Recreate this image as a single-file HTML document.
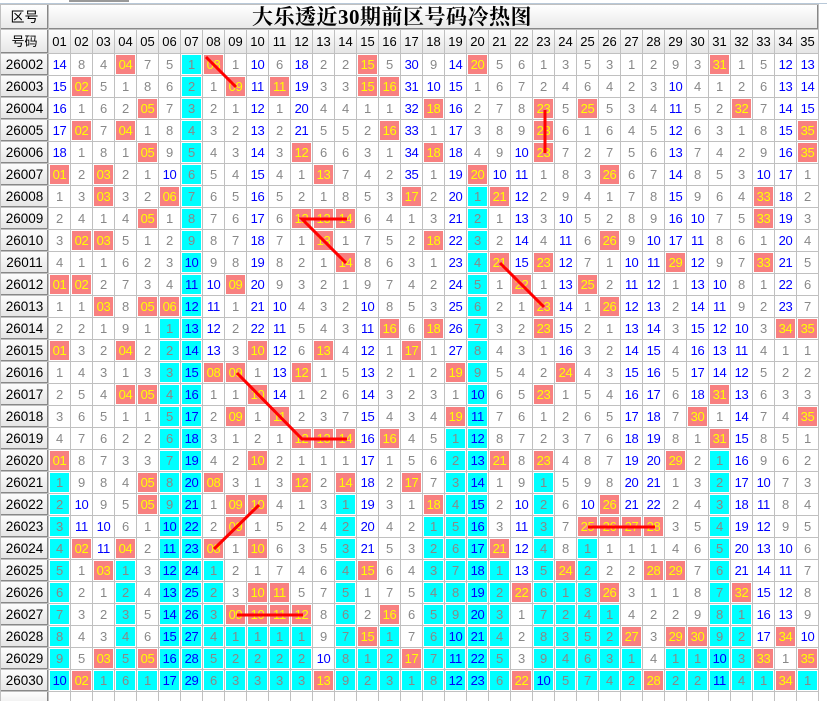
<!DOCTYPE html>
<html><head><meta charset="utf-8"><style>
html,body{margin:0;padding:0;background:#fff;width:827px;height:701px;overflow:hidden;position:relative}
.topline{position:absolute;left:0;top:3px;width:827px;height:1px;background:#b8c8d8}
.tab{position:absolute;left:69px;top:0;width:60px;height:2px;background:#999}
table{position:absolute;left:0;top:4px;border-collapse:separate;border-spacing:1px;background:#c0c0c0;table-layout:fixed;font-family:"Liberation Sans",sans-serif}
td{width:21px;height:21px;padding:0;background:#fff;text-align:center;vertical-align:middle;font-size:13px;color:#888;letter-spacing:-0.3px;line-height:21px;overflow:hidden;white-space:nowrap}
td.h{width:47px;color:#000;background:linear-gradient(#fdfdfd,#e4e4e4);box-shadow:inset -1px -1px 0 #888;font-size:13.5px;letter-spacing:0}
tr.hd td{height:23px;color:#000;background:linear-gradient(#fdfdfd,#e6e6e6);font-size:13px;letter-spacing:0}
tr.tt td{height:24px;background:linear-gradient(#ffffff,#e8e8e8);color:#000}
td.ti{text-align:left;padding-left:203px;font-family:"Liberation Serif","Noto Serif CJK SC",serif;font-weight:bold;font-size:21px;letter-spacing:0.5px;box-shadow:inset -1px -1px 0 #888}
td.b{color:#0000ff}
td.r{background:#f88080;color:#ffff00;box-shadow:inset 0 0 0 1px #fff}
td.c{background:#00ffff;box-shadow:inset 0 0 0 1px #fff}
tr.e td{height:21px}
svg{position:absolute;left:0;top:0}
</style></head><body>
<div class="topline"></div><div class="tab"></div>
<table>
<tr class="tt"><td class="h" style="height:24px;font-size:14px">区号</td><td class="ti" colspan="35">大乐透近30期前区号码冷热图</td></tr>
<tr class="hd"><td class="h" style="height:23px">号码</td><td>01</td><td>02</td><td>03</td><td>04</td><td>05</td><td>06</td><td>07</td><td>08</td><td>09</td><td>10</td><td>11</td><td>12</td><td>13</td><td>14</td><td>15</td><td>16</td><td>17</td><td>18</td><td>19</td><td>20</td><td>21</td><td>22</td><td>23</td><td>24</td><td>25</td><td>26</td><td>27</td><td>28</td><td>29</td><td>30</td><td>31</td><td>32</td><td>33</td><td>34</td><td>35</td></tr>
<tr><td class="h">26002</td><td class=b>14</td><td>8</td><td>4</td><td class=r>04</td><td>7</td><td>5</td><td class=c>1</td><td class=r>08</td><td>1</td><td class=b>10</td><td>6</td><td class=b>18</td><td>2</td><td>2</td><td class=r>15</td><td>5</td><td class=b>30</td><td>9</td><td class=b>14</td><td class=r>20</td><td>5</td><td>6</td><td>1</td><td>3</td><td>5</td><td>3</td><td>1</td><td>2</td><td>9</td><td>3</td><td class=r>31</td><td>1</td><td>5</td><td class=b>12</td><td class=b>13</td></tr>
<tr><td class="h">26003</td><td class=b>15</td><td class=r>02</td><td>5</td><td>1</td><td>8</td><td>6</td><td class=c>2</td><td>1</td><td class=r>09</td><td class=b>11</td><td class=r>11</td><td class=b>19</td><td>3</td><td>3</td><td class=r>15</td><td class=r>16</td><td class=b>31</td><td class=b>10</td><td class=b>15</td><td>1</td><td>6</td><td>7</td><td>2</td><td>4</td><td>6</td><td>4</td><td>2</td><td>3</td><td class=b>10</td><td>4</td><td>1</td><td>2</td><td>6</td><td class=b>13</td><td class=b>14</td></tr>
<tr><td class="h">26004</td><td class=b>16</td><td>1</td><td>6</td><td>2</td><td class=r>05</td><td>7</td><td class=c>3</td><td>2</td><td>1</td><td class=b>12</td><td>1</td><td class=b>20</td><td>4</td><td>4</td><td>1</td><td>1</td><td class=b>32</td><td class=r>18</td><td class=b>16</td><td>2</td><td>7</td><td>8</td><td class=r>23</td><td>5</td><td class=r>25</td><td>5</td><td>3</td><td>4</td><td class=b>11</td><td>5</td><td>2</td><td class=r>32</td><td>7</td><td class=b>14</td><td class=b>15</td></tr>
<tr><td class="h">26005</td><td class=b>17</td><td class=r>02</td><td>7</td><td class=r>04</td><td>1</td><td>8</td><td class=c>4</td><td>3</td><td>2</td><td class=b>13</td><td>2</td><td class=b>21</td><td>5</td><td>5</td><td>2</td><td class=r>16</td><td class=b>33</td><td>1</td><td class=b>17</td><td>3</td><td>8</td><td>9</td><td class=r>23</td><td>6</td><td>1</td><td>6</td><td>4</td><td>5</td><td class=b>12</td><td>6</td><td>3</td><td>1</td><td>8</td><td class=b>15</td><td class=r>35</td></tr>
<tr><td class="h">26006</td><td class=b>18</td><td>1</td><td>8</td><td>1</td><td class=r>05</td><td>9</td><td class=c>5</td><td>4</td><td>3</td><td class=b>14</td><td>3</td><td class=r>12</td><td>6</td><td>6</td><td>3</td><td>1</td><td class=b>34</td><td class=r>18</td><td class=b>18</td><td>4</td><td>9</td><td class=b>10</td><td class=r>23</td><td>7</td><td>2</td><td>7</td><td>5</td><td>6</td><td class=b>13</td><td>7</td><td>4</td><td>2</td><td>9</td><td class=b>16</td><td class=r>35</td></tr>
<tr><td class="h">26007</td><td class=r>01</td><td>2</td><td class=r>03</td><td>2</td><td>1</td><td class=b>10</td><td class=c>6</td><td>5</td><td>4</td><td class=b>15</td><td>4</td><td>1</td><td class=r>13</td><td>7</td><td>4</td><td>2</td><td class=b>35</td><td>1</td><td class=b>19</td><td class=r>20</td><td class=b>10</td><td class=b>11</td><td>1</td><td>8</td><td>3</td><td class=r>26</td><td>6</td><td>7</td><td class=b>14</td><td>8</td><td>5</td><td>3</td><td class=b>10</td><td class=b>17</td><td>1</td></tr>
<tr><td class="h">26008</td><td>1</td><td>3</td><td class=r>03</td><td>3</td><td>2</td><td class=r>06</td><td class=c>7</td><td>6</td><td>5</td><td class=b>16</td><td>5</td><td>2</td><td>1</td><td>8</td><td>5</td><td>3</td><td class=r>17</td><td>2</td><td class=b>20</td><td class=c>1</td><td class=r>21</td><td class=b>12</td><td>2</td><td>9</td><td>4</td><td>1</td><td>7</td><td>8</td><td class=b>15</td><td>9</td><td>6</td><td>4</td><td class=r>33</td><td class=b>18</td><td>2</td></tr>
<tr><td class="h">26009</td><td>2</td><td>4</td><td>1</td><td>4</td><td class=r>05</td><td>1</td><td class=c>8</td><td>7</td><td>6</td><td class=b>17</td><td>6</td><td class=r>12</td><td class=r>13</td><td class=r>14</td><td>6</td><td>4</td><td>1</td><td>3</td><td class=b>21</td><td class=c>2</td><td>1</td><td class=b>13</td><td>3</td><td class=b>10</td><td>5</td><td>2</td><td>8</td><td>9</td><td class=b>16</td><td class=b>10</td><td>7</td><td>5</td><td class=r>33</td><td class=b>19</td><td>3</td></tr>
<tr><td class="h">26010</td><td>3</td><td class=r>02</td><td class=r>03</td><td>5</td><td>1</td><td>2</td><td class=c>9</td><td>8</td><td>7</td><td class=b>18</td><td>7</td><td>1</td><td class=r>13</td><td>1</td><td>7</td><td>5</td><td>2</td><td class=r>18</td><td class=b>22</td><td class=c>3</td><td>2</td><td class=b>14</td><td>4</td><td class=b>11</td><td>6</td><td class=r>26</td><td>9</td><td class=b>10</td><td class=b>17</td><td class=b>11</td><td>8</td><td>6</td><td>1</td><td class=b>20</td><td>4</td></tr>
<tr><td class="h">26011</td><td>4</td><td>1</td><td>1</td><td>6</td><td>2</td><td>3</td><td class="c b">10</td><td>9</td><td>8</td><td class=b>19</td><td>8</td><td>2</td><td>1</td><td class=r>14</td><td>8</td><td>6</td><td>3</td><td>1</td><td class=b>23</td><td class=c>4</td><td class=r>21</td><td class=b>15</td><td class=r>23</td><td class=b>12</td><td>7</td><td>1</td><td class=b>10</td><td class=b>11</td><td class=r>29</td><td class=b>12</td><td>9</td><td>7</td><td class=r>33</td><td class=b>21</td><td>5</td></tr>
<tr><td class="h">26012</td><td class=r>01</td><td class=r>02</td><td>2</td><td>7</td><td>3</td><td>4</td><td class="c b">11</td><td class=b>10</td><td class=r>09</td><td class=b>20</td><td>9</td><td>3</td><td>2</td><td>1</td><td>9</td><td>7</td><td>4</td><td>2</td><td class=b>24</td><td class=c>5</td><td>1</td><td class=r>22</td><td>1</td><td class=b>13</td><td class=r>25</td><td>2</td><td class=b>11</td><td class=b>12</td><td>1</td><td class=b>13</td><td class=b>10</td><td>8</td><td>1</td><td class=b>22</td><td>6</td></tr>
<tr><td class="h">26013</td><td>1</td><td>1</td><td class=r>03</td><td>8</td><td class=r>05</td><td class=r>06</td><td class="c b">12</td><td class=b>11</td><td>1</td><td class=b>21</td><td class=b>10</td><td>4</td><td>3</td><td>2</td><td class=b>10</td><td>8</td><td>5</td><td>3</td><td class=b>25</td><td class=c>6</td><td>2</td><td>1</td><td class=r>23</td><td class=b>14</td><td>1</td><td class=r>26</td><td class=b>12</td><td class=b>13</td><td>2</td><td class=b>14</td><td class=b>11</td><td>9</td><td>2</td><td class=b>23</td><td>7</td></tr>
<tr><td class="h">26014</td><td>2</td><td>2</td><td>1</td><td>9</td><td>1</td><td class=c>1</td><td class="c b">13</td><td class=b>12</td><td>2</td><td class=b>22</td><td class=b>11</td><td>5</td><td>4</td><td>3</td><td class=b>11</td><td class=r>16</td><td>6</td><td class=r>18</td><td class=b>26</td><td class=c>7</td><td>3</td><td>2</td><td class=r>23</td><td class=b>15</td><td>2</td><td>1</td><td class=b>13</td><td class=b>14</td><td>3</td><td class=b>15</td><td class=b>12</td><td class=b>10</td><td>3</td><td class=r>34</td><td class=r>35</td></tr>
<tr><td class="h">26015</td><td class=r>01</td><td>3</td><td>2</td><td class=r>04</td><td>2</td><td class=c>2</td><td class="c b">14</td><td class=b>13</td><td>3</td><td class=r>10</td><td class=b>12</td><td>6</td><td class=r>13</td><td>4</td><td class=b>12</td><td>1</td><td class=r>17</td><td>1</td><td class=b>27</td><td class=c>8</td><td>4</td><td>3</td><td>1</td><td class=b>16</td><td>3</td><td>2</td><td class=b>14</td><td class=b>15</td><td>4</td><td class=b>16</td><td class=b>13</td><td class=b>11</td><td>4</td><td>1</td><td>1</td></tr>
<tr><td class="h">26016</td><td>1</td><td>4</td><td>3</td><td>1</td><td>3</td><td class=c>3</td><td class="c b">15</td><td class=r>08</td><td class=r>09</td><td>1</td><td class=b>13</td><td class=r>12</td><td>1</td><td>5</td><td class=b>13</td><td>2</td><td>1</td><td>2</td><td class=r>19</td><td class=c>9</td><td>5</td><td>4</td><td>2</td><td class=r>24</td><td>4</td><td>3</td><td class=b>15</td><td class=b>16</td><td>5</td><td class=b>17</td><td class=b>14</td><td class=b>12</td><td>5</td><td>2</td><td>2</td></tr>
<tr><td class="h">26017</td><td>2</td><td>5</td><td>4</td><td class=r>04</td><td class=r>05</td><td class=c>4</td><td class="c b">16</td><td>1</td><td>1</td><td class=r>10</td><td class=b>14</td><td>1</td><td>2</td><td>6</td><td class=b>14</td><td>3</td><td>2</td><td>3</td><td>1</td><td class="c b">10</td><td>6</td><td>5</td><td class=r>23</td><td>1</td><td>5</td><td>4</td><td class=b>16</td><td class=b>17</td><td>6</td><td class=b>18</td><td class=r>31</td><td class=b>13</td><td>6</td><td>3</td><td>3</td></tr>
<tr><td class="h">26018</td><td>3</td><td>6</td><td>5</td><td>1</td><td>1</td><td class=c>5</td><td class="c b">17</td><td>2</td><td class=r>09</td><td>1</td><td class=r>11</td><td>2</td><td>3</td><td>7</td><td class=b>15</td><td>4</td><td>3</td><td>4</td><td class=r>19</td><td class="c b">11</td><td>7</td><td>6</td><td>1</td><td>2</td><td>6</td><td>5</td><td class=b>17</td><td class=b>18</td><td>7</td><td class=r>30</td><td>1</td><td class=b>14</td><td>7</td><td>4</td><td class=r>35</td></tr>
<tr><td class="h">26019</td><td>4</td><td>7</td><td>6</td><td>2</td><td>2</td><td class=c>6</td><td class="c b">18</td><td>3</td><td>1</td><td>2</td><td>1</td><td class=r>12</td><td class=r>13</td><td class=r>14</td><td class=b>16</td><td class=r>16</td><td>4</td><td>5</td><td class=c>1</td><td class="c b">12</td><td>8</td><td>7</td><td>2</td><td>3</td><td>7</td><td>6</td><td class=b>18</td><td class=b>19</td><td>8</td><td>1</td><td class=r>31</td><td class=b>15</td><td>8</td><td>5</td><td>1</td></tr>
<tr><td class="h">26020</td><td class=r>01</td><td>8</td><td>7</td><td>3</td><td>3</td><td class=c>7</td><td class="c b">19</td><td>4</td><td>2</td><td class=r>10</td><td>2</td><td>1</td><td>1</td><td>1</td><td class=b>17</td><td>1</td><td>5</td><td>6</td><td class=c>2</td><td class="c b">13</td><td class=r>21</td><td>8</td><td class=r>23</td><td>4</td><td>8</td><td>7</td><td class=b>19</td><td class=b>20</td><td class=r>29</td><td>2</td><td class=c>1</td><td class=b>16</td><td>9</td><td>6</td><td>2</td></tr>
<tr><td class="h">26021</td><td class=c>1</td><td>9</td><td>8</td><td>4</td><td class=r>05</td><td class=c>8</td><td class="c b">20</td><td class=r>08</td><td>3</td><td>1</td><td>3</td><td class=r>12</td><td>2</td><td class=r>14</td><td class=b>18</td><td>2</td><td class=r>17</td><td>7</td><td class=c>3</td><td class="c b">14</td><td>1</td><td>9</td><td class=c>1</td><td>5</td><td>9</td><td>8</td><td class=b>20</td><td class=b>21</td><td>1</td><td>3</td><td class=c>2</td><td class=b>17</td><td class=b>10</td><td>7</td><td>3</td></tr>
<tr><td class="h">26022</td><td class=c>2</td><td class=b>10</td><td>9</td><td>5</td><td class=r>05</td><td class=c>9</td><td class="c b">21</td><td>1</td><td class=r>09</td><td class=r>10</td><td>4</td><td>1</td><td>3</td><td class=c>1</td><td class=b>19</td><td>3</td><td>1</td><td class=r>18</td><td class=c>4</td><td class="c b">15</td><td>2</td><td class=b>10</td><td class=c>2</td><td>6</td><td class=b>10</td><td class=r>26</td><td class=b>21</td><td class=b>22</td><td>2</td><td>4</td><td class=c>3</td><td class=b>18</td><td class=b>11</td><td>8</td><td>4</td></tr>
<tr><td class="h">26023</td><td class=c>3</td><td class=b>11</td><td class=b>10</td><td>6</td><td>1</td><td class="c b">10</td><td class="c b">22</td><td>2</td><td class=r>09</td><td>1</td><td>5</td><td>2</td><td>4</td><td class=c>2</td><td class=b>20</td><td>4</td><td>2</td><td class=c>1</td><td class=c>5</td><td class="c b">16</td><td>3</td><td class=b>11</td><td class=c>3</td><td>7</td><td class=r>25</td><td class=r>26</td><td class=r>27</td><td class=r>28</td><td>3</td><td>5</td><td class=c>4</td><td class=b>19</td><td class=b>12</td><td>9</td><td>5</td></tr>
<tr><td class="h">26024</td><td class=c>4</td><td class=r>02</td><td class=b>11</td><td class=r>04</td><td>2</td><td class="c b">11</td><td class="c b">23</td><td class=r>08</td><td>1</td><td class=r>10</td><td>6</td><td>3</td><td>5</td><td class=c>3</td><td class=b>21</td><td>5</td><td>3</td><td class=c>2</td><td class=c>6</td><td class="c b">17</td><td class=r>21</td><td class=b>12</td><td class=c>4</td><td>8</td><td class=c>1</td><td>1</td><td>1</td><td>1</td><td>4</td><td>6</td><td class=c>5</td><td class=b>20</td><td class=b>13</td><td class=b>10</td><td>6</td></tr>
<tr><td class="h">26025</td><td class=c>5</td><td>1</td><td class=r>03</td><td class=c>1</td><td>3</td><td class="c b">12</td><td class="c b">24</td><td class=c>1</td><td>2</td><td>1</td><td>7</td><td>4</td><td>6</td><td class=c>4</td><td class=r>15</td><td>6</td><td>4</td><td class=c>3</td><td class=c>7</td><td class="c b">18</td><td class=c>1</td><td class=b>13</td><td class=c>5</td><td class=r>24</td><td class=c>2</td><td>2</td><td>2</td><td class=r>28</td><td class=r>29</td><td>7</td><td class=c>6</td><td class=b>21</td><td class=b>14</td><td class=b>11</td><td>7</td></tr>
<tr><td class="h">26026</td><td class=c>6</td><td>2</td><td>1</td><td class=c>2</td><td>4</td><td class="c b">13</td><td class="c b">25</td><td class=c>2</td><td>3</td><td class=r>10</td><td class=r>11</td><td>5</td><td>7</td><td class=c>5</td><td>1</td><td>7</td><td>5</td><td class=c>4</td><td class=c>8</td><td class="c b">19</td><td class=c>2</td><td class=r>22</td><td class=c>6</td><td class=c>1</td><td class=c>3</td><td class=r>26</td><td>3</td><td>1</td><td>1</td><td>8</td><td class=c>7</td><td class=r>32</td><td class=b>15</td><td class=b>12</td><td>8</td></tr>
<tr><td class="h">26027</td><td class=c>7</td><td>3</td><td>2</td><td class=c>3</td><td>5</td><td class="c b">14</td><td class="c b">26</td><td class=c>3</td><td class=r>09</td><td class=r>10</td><td class=r>11</td><td class=r>12</td><td>8</td><td class=c>6</td><td>2</td><td class=r>16</td><td>6</td><td class=c>5</td><td class=c>9</td><td class="c b">20</td><td class=c>3</td><td>1</td><td class=c>7</td><td class=c>2</td><td class=c>4</td><td class=c>1</td><td>4</td><td>2</td><td>2</td><td>9</td><td class=c>8</td><td class=c>1</td><td class=b>16</td><td class=b>13</td><td>9</td></tr>
<tr><td class="h">26028</td><td class=c>8</td><td>4</td><td>3</td><td class=c>4</td><td>6</td><td class="c b">15</td><td class="c b">27</td><td class=c>4</td><td class=c>1</td><td class=c>1</td><td class=c>1</td><td class=c>1</td><td>9</td><td class=c>7</td><td class=r>15</td><td class=c>1</td><td>7</td><td class=c>6</td><td class="c b">10</td><td class="c b">21</td><td class=c>4</td><td>2</td><td class=c>8</td><td class=c>3</td><td class=c>5</td><td class=c>2</td><td class=r>27</td><td>3</td><td class=r>29</td><td class=r>30</td><td class=c>9</td><td class=c>2</td><td class=b>17</td><td class=r>34</td><td class=b>10</td></tr>
<tr><td class="h">26029</td><td class=c>9</td><td>5</td><td class=r>03</td><td class=c>5</td><td class=r>05</td><td class="c b">16</td><td class="c b">28</td><td class=c>5</td><td class=c>2</td><td class=c>2</td><td class=c>2</td><td class=c>2</td><td class=b>10</td><td class=c>8</td><td class=c>1</td><td class=c>2</td><td class=r>17</td><td class=c>7</td><td class="c b">11</td><td class="c b">22</td><td class=c>5</td><td>3</td><td class=c>9</td><td class=c>4</td><td class=c>6</td><td class=c>3</td><td class=c>1</td><td>4</td><td class=c>1</td><td class=c>1</td><td class="c b">10</td><td class=c>3</td><td class=r>33</td><td>1</td><td class=r>35</td></tr>
<tr><td class="h">26030</td><td class="c b">10</td><td class=r>02</td><td class=c>1</td><td class=c>6</td><td class=c>1</td><td class="c b">17</td><td class="c b">29</td><td class=c>6</td><td class=c>3</td><td class=c>3</td><td class=c>3</td><td class=c>3</td><td class=r>13</td><td class=c>9</td><td class=c>2</td><td class=c>3</td><td class=c>1</td><td class=c>8</td><td class="c b">12</td><td class="c b">23</td><td class=c>6</td><td class=r>22</td><td class="c b">10</td><td class=c>5</td><td class=c>7</td><td class=c>4</td><td class=c>2</td><td class=r>28</td><td class=c>2</td><td class=c>2</td><td class="c b">11</td><td class=c>4</td><td class=c>1</td><td class=r>34</td><td class=c>1</td></tr>
<tr class="e"><td class="h"></td><td></td><td></td><td></td><td></td><td></td><td></td><td></td><td></td><td></td><td></td><td></td><td></td><td></td><td></td><td></td><td></td><td></td><td></td><td></td><td></td><td></td><td></td><td></td><td></td><td></td><td></td><td></td><td></td><td></td><td></td><td></td><td></td><td></td><td></td><td></td></tr>
</table>
<svg width="827" height="701" viewBox="0 0 827 701">
<g stroke="#ff0000" stroke-width="3" fill="none" stroke-linecap="butt">
<line x1="206" y1="57" x2="236" y2="87"/>
<line x1="545" y1="110" x2="545" y2="153"/>
<polyline points="347,219 302,219 346,263"/>
<line x1="500" y1="263" x2="544" y2="307"/>
<polyline points="237,373 302,439 347,439"/>
<line x1="259" y1="505" x2="214" y2="549"/>
<line x1="588" y1="527" x2="655" y2="527"/>
<line x1="237" y1="615" x2="303" y2="615"/>
</g></svg>
</body></html>
